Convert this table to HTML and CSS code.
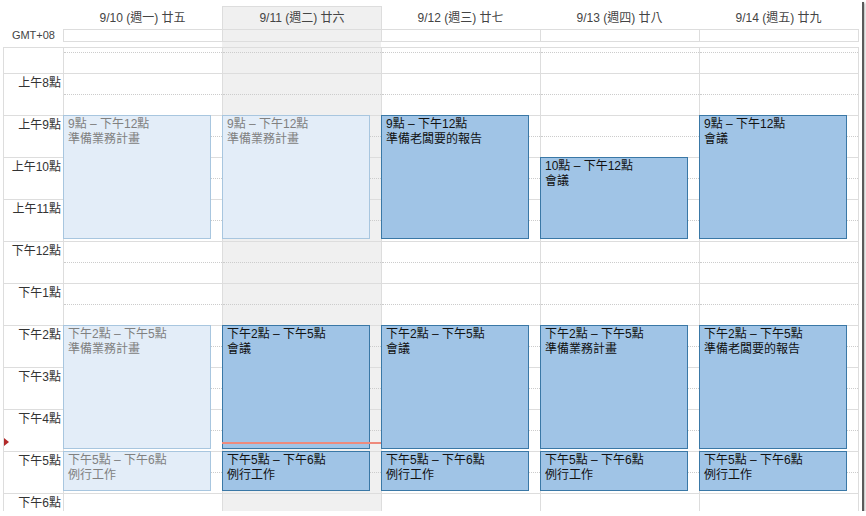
FILE: index.html
```html
<!DOCTYPE html>
<html lang="zh-Hant">
<head>
    <meta charset="UTF-8">
    <title>週曆</title>
    <link rel="stylesheet" href="styles.css">
</head>
<body>

<div class="frame">

    <div class="head">
        <div class="corner"></div>
        <div class="day-name">9/10 (週一) 廿五</div>
        <div class="day-name today">9/11 (週二) 廿六</div>
        <div class="day-name">9/12 (週三) 廿七</div>
        <div class="day-name">9/13 (週四) 廿八</div>
        <div class="day-name">9/14 (週五) 廿九</div>
    </div>

    <div class="allday">
        <div class="tz">GMT+08</div>
        <div class="allday-box">
            <div class="allday-cell"></div>
            <div class="allday-cell today"></div>
            <div class="allday-cell"></div>
            <div class="allday-cell"></div>
            <div class="allday-cell"></div>
        </div>
    </div>

    <div class="body">
        <div class="grid">

            <!-- time labels -->
            <div class="gutter">
                <div class="hour-label"></div>
                <div class="hour-label">上午8點</div>
                <div class="hour-label">上午9點</div>
                <div class="hour-label">上午10點</div>
                <div class="hour-label">上午11點</div>
                <div class="hour-label">下午12點</div>
                <div class="hour-label">下午1點</div>
                <div class="hour-label">下午2點</div>
                <div class="hour-label">下午3點</div>
                <div class="hour-label">下午4點</div>
                <div class="hour-label">下午5點</div>
                <div class="hour-label">下午6點</div>
                <div class="now-marker" style="top: 407px"></div>
            </div>

            <!-- 9/10 -->
            <div class="day">
                <div class="slot"></div><div class="slot"></div><div class="slot"></div>
                <div class="slot"></div><div class="slot"></div><div class="slot"></div>
                <div class="slot"></div><div class="slot"></div><div class="slot"></div>
                <div class="slot"></div><div class="slot"></div><div class="slot"></div>

                <div class="event past" style="top: 84px; height: 124px">
                    <div>9點 – 下午12點</div>
                    <div>準備業務計畫</div>
                </div>
                <div class="event past" style="top: 294px; height: 124px">
                    <div>下午2點 – 下午5點</div>
                    <div>準備業務計畫</div>
                </div>
                <div class="event past" style="top: 420px; height: 40px">
                    <div>下午5點 – 下午6點</div>
                    <div>例行工作</div>
                </div>
            </div>

            <!-- 9/11 (today) -->
            <div class="day today">
                <div class="slot"></div><div class="slot"></div><div class="slot"></div>
                <div class="slot"></div><div class="slot"></div><div class="slot"></div>
                <div class="slot"></div><div class="slot"></div><div class="slot"></div>
                <div class="slot"></div><div class="slot"></div><div class="slot"></div>

                <div class="event past" style="top: 84px; height: 124px">
                    <div>9點 – 下午12點</div>
                    <div>準備業務計畫</div>
                </div>
                <div class="event" style="top: 294px; height: 124px">
                    <div>下午2點 – 下午5點</div>
                    <div>會議</div>
                </div>
                <div class="event" style="top: 420px; height: 40px">
                    <div>下午5點 – 下午6點</div>
                    <div>例行工作</div>
                </div>
                <div class="now-line" style="top: 411px"></div>
            </div>

            <!-- 9/12 -->
            <div class="day">
                <div class="slot"></div><div class="slot"></div><div class="slot"></div>
                <div class="slot"></div><div class="slot"></div><div class="slot"></div>
                <div class="slot"></div><div class="slot"></div><div class="slot"></div>
                <div class="slot"></div><div class="slot"></div><div class="slot"></div>

                <div class="event" style="top: 84px; height: 124px">
                    <div>9點 – 下午12點</div>
                    <div>準備老闆要的報告</div>
                </div>
                <div class="event" style="top: 294px; height: 124px">
                    <div>下午2點 – 下午5點</div>
                    <div>會議</div>
                </div>
                <div class="event" style="top: 420px; height: 40px">
                    <div>下午5點 – 下午6點</div>
                    <div>例行工作</div>
                </div>
            </div>

            <!-- 9/13 -->
            <div class="day">
                <div class="slot"></div><div class="slot"></div><div class="slot"></div>
                <div class="slot"></div><div class="slot"></div><div class="slot"></div>
                <div class="slot"></div><div class="slot"></div><div class="slot"></div>
                <div class="slot"></div><div class="slot"></div><div class="slot"></div>

                <div class="event" style="top: 126px; height: 82px">
                    <div>10點 – 下午12點</div>
                    <div>會議</div>
                </div>
                <div class="event" style="top: 294px; height: 124px">
                    <div>下午2點 – 下午5點</div>
                    <div>準備業務計畫</div>
                </div>
                <div class="event" style="top: 420px; height: 40px">
                    <div>下午5點 – 下午6點</div>
                    <div>例行工作</div>
                </div>
            </div>

            <!-- 9/14 -->
            <div class="day">
                <div class="slot"></div><div class="slot"></div><div class="slot"></div>
                <div class="slot"></div><div class="slot"></div><div class="slot"></div>
                <div class="slot"></div><div class="slot"></div><div class="slot"></div>
                <div class="slot"></div><div class="slot"></div><div class="slot"></div>

                <div class="event" style="top: 84px; height: 124px">
                    <div>9點 – 下午12點</div>
                    <div>會議</div>
                </div>
                <div class="event" style="top: 294px; height: 124px">
                    <div>下午2點 – 下午5點</div>
                    <div>準備老闆要的報告</div>
                </div>
                <div class="event" style="top: 420px; height: 40px">
                    <div>下午5點 – 下午6點</div>
                    <div>例行工作</div>
                </div>
            </div>

        </div>
    </div>

</div>

</body>
</html>
```

FILE: styles.css
```css
/* Week view */
body {
    margin: 0;
    background: #fff;
    font-family: "Liberation Sans", "Noto Sans CJK TC", sans-serif;
    font-size: 12px;
    color: #333;
}

.frame {
    width: 862px;
    height: 511px;
    background: #fff;
    box-shadow: 2px 2px 0 #5a5a5a, 3px 3px 2px rgba(0,0,0,0.3);
}

/* day names */
.head {
    display: grid;
    grid-template-columns: 63px repeat(5, 159px);
    padding-top: 6px;
}
.day-name {
    height: 23px;
    line-height: 22px;
    text-align: center;
    color: #444;
    border-top: 1px solid transparent;
    box-sizing: border-box;
}
.day-name.today {
    background: #f0f0f0;
    border: 1px solid #ddd;
    border-bottom: none;
    margin-right: -1px;
}

/* all day row */
.allday {
    display: flex;
    margin-bottom: 5px;
}
.tz {
    width: 63px;
    padding-right: 8px;
    box-sizing: border-box;
    text-align: right;
    font-size: 11px;
    line-height: 13px;
    color: #444;
}
.allday-box {
    display: grid;
    grid-template-columns: repeat(5, 159px);
    border-top: 1px solid #ddd;
    border-right: 1px solid #ddd;
}
.allday-cell {
    height: 12px;
    border-left: 1px solid #ddd;
    border-bottom: 1px solid #ddd;
    box-sizing: border-box;
}
.allday-cell.today {
    background: #f0f0f0;
    box-shadow: 0 5px 0 #f0f0f0;
}

/* time grid */
.body {
    margin-left: 3px;
    width: 856px;
    height: 464px;
    box-sizing: border-box;
    border: 1px solid #ddd;
    border-bottom: none;
    overflow: hidden;
}
.grid {
    display: grid;
    grid-template-columns: 59px repeat(5, 159px);
    margin-top: -17px;
}
.gutter { position: relative; }
.hour-label {
    height: 42px;
    box-sizing: border-box;
    border-top: 1px solid #ddd;
    padding: 2px 2px 0 0;
    line-height: 15px;
    text-align: right;
    color: #333;
}
.day {
    position: relative;
    border-left: 1px solid #ddd;
}
.day.today { background: #f0f0f0; }
.slot {
    position: relative;
    height: 42px;
    box-sizing: border-box;
    border-top: 1px solid #ddd;
}
.slot::after {
    content: "";
    position: absolute;
    left: 0;
    right: 0;
    top: 20px;
    border-top: 1px dotted #ccc;
}

/* events */
.event {
    position: absolute;
    left: -1px;
    width: 148px;
    box-sizing: border-box;
    padding: 1px 4px;
    line-height: 15px;
    white-space: nowrap;
    overflow: hidden;
    background: #a0c4e6;
    border: 1px solid #3a78a6;
    color: #111;
}
.event.past {
    background: #e3edf8;
    border-color: #a8c6df;
    color: #808080;
}

.now-line {
    position: absolute;
    left: -1px;
    width: 160px;
    height: 2px;
    background: #ee8a7c;
}
.now-marker {
    position: absolute;
    left: 0;
    width: 0;
    height: 0;
    border-left: 5px solid #b22a2a;
    border-top: 4px solid transparent;
    border-bottom: 4px solid transparent;
}
```
